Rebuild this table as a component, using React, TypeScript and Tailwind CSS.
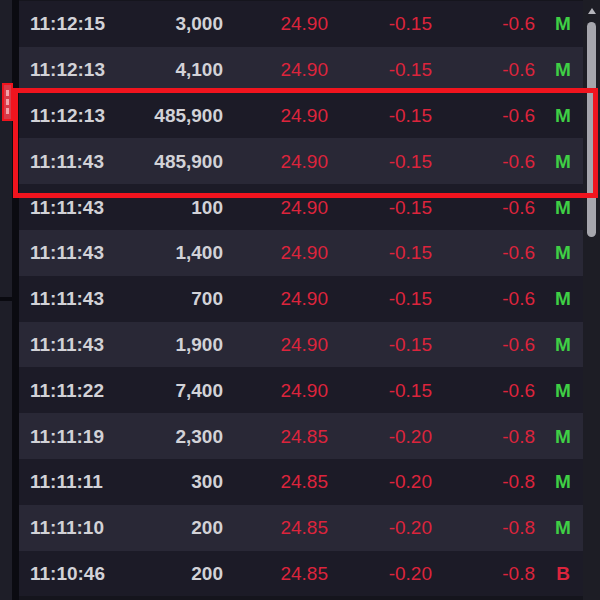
import React from 'react';

type Trade = { time: string; vol: string; price: string; chg: string; pct: string; flag: 'M' | 'B' };

const trades: Trade[] = [
  { time: '11:12:15', vol: '3,000', price: '24.90', chg: '-0.15', pct: '-0.6', flag: 'M' },
  { time: '11:12:13', vol: '4,100', price: '24.90', chg: '-0.15', pct: '-0.6', flag: 'M' },
  { time: '11:12:13', vol: '485,900', price: '24.90', chg: '-0.15', pct: '-0.6', flag: 'M' },
  { time: '11:11:43', vol: '485,900', price: '24.90', chg: '-0.15', pct: '-0.6', flag: 'M' },
  { time: '11:11:43', vol: '100', price: '24.90', chg: '-0.15', pct: '-0.6', flag: 'M' },
  { time: '11:11:43', vol: '1,400', price: '24.90', chg: '-0.15', pct: '-0.6', flag: 'M' },
  { time: '11:11:43', vol: '700', price: '24.90', chg: '-0.15', pct: '-0.6', flag: 'M' },
  { time: '11:11:43', vol: '1,900', price: '24.90', chg: '-0.15', pct: '-0.6', flag: 'M' },
  { time: '11:11:22', vol: '7,400', price: '24.90', chg: '-0.15', pct: '-0.6', flag: 'M' },
  { time: '11:11:19', vol: '2,300', price: '24.85', chg: '-0.20', pct: '-0.8', flag: 'M' },
  { time: '11:11:11', vol: '300', price: '24.85', chg: '-0.20', pct: '-0.8', flag: 'M' },
  { time: '11:11:10', vol: '200', price: '24.85', chg: '-0.20', pct: '-0.8', flag: 'M' },
  { time: '11:10:46', vol: '200', price: '24.85', chg: '-0.20', pct: '-0.8', flag: 'B' },
];

function TradeRow({ t, index }: { t: Trade; index: number }) {
  const bg = index % 2 === 0 ? 'bg-[#1c1b27]' : 'bg-[#292836]';
  return (
    <div className={`flex items-center h-[45.8px] pl-[11px] text-[19px] leading-none ${bg}`}>
      <span className="w-[100px] font-bold text-[#d2d2d7]">{t.time}</span>
      <span className="w-[93px] text-right font-bold text-[#d2d2d7]">{t.vol}</span>
      <span className="w-[105px] text-right text-[#dc243c]">{t.price}</span>
      <span className="w-[104px] text-right text-[#dc243c]">{t.chg}</span>
      <span className="w-[103px] text-right text-[#dc243c]">{t.pct}</span>
      <span
        className={`ml-[8px] w-[40px] text-center font-bold ${
          t.flag === 'M' ? 'text-[#3fcf45]' : 'text-[#dc243c]'
        }`}
      >
        {t.flag}
      </span>
    </div>
  );
}

export default function App() {
  return (
    <div
      className="relative flex w-[600px] h-[600px] overflow-hidden bg-[#1a1a22]"
      style={{ fontFamily: '"Liberation Sans", Arial, sans-serif' }}
    >
      {/* left side strip */}
      <div className="flex flex-col w-[12px] bg-[#1e1e28]">
        <div className="h-[297px]" />
        <div className="h-[4px] bg-[#0a0a10]" />
      </div>
      <div className="w-[7px] bg-[#0b0b11]" />

      {/* trades table */}
      <div className="flex flex-col w-[564px] pt-[1px] bg-[#15151d]">
        {trades.map((t, i) => (
          <TradeRow key={i} t={t} index={i} />
        ))}
      </div>

      {/* scrollbar */}
      <div className="relative w-[17px] bg-[#1d1d25]">
        <div className="absolute left-[5px] top-[8px] w-0 h-0 border-l-[4px] border-r-[4px] border-b-[6px] border-l-transparent border-r-transparent border-b-[#b4b4bb]" />
        <div className="absolute left-[4px] top-[22px] w-[9px] h-[215px] rounded-full bg-[#a6a6ad]" />
      </div>

      {/* highlight box */}
      <div className="absolute left-[13px] top-[88px] w-[585px] h-[110px] border-[5px] border-[#f0141e]" />
      {/* side tab marker */}
      <div className="absolute left-[2px] top-[83px] w-[11px] h-[38px] border-2 border-[#f0141e] bg-[#d83a48] flex flex-col items-center justify-center gap-[3px]">
        <div className="w-[3px] h-[6px] bg-[#f3a0a8]" />
        <div className="w-[3px] h-[6px] bg-[#f3a0a8]" />
        <div className="w-[3px] h-[6px] bg-[#f3a0a8]" />
      </div>
    </div>
  );
}
